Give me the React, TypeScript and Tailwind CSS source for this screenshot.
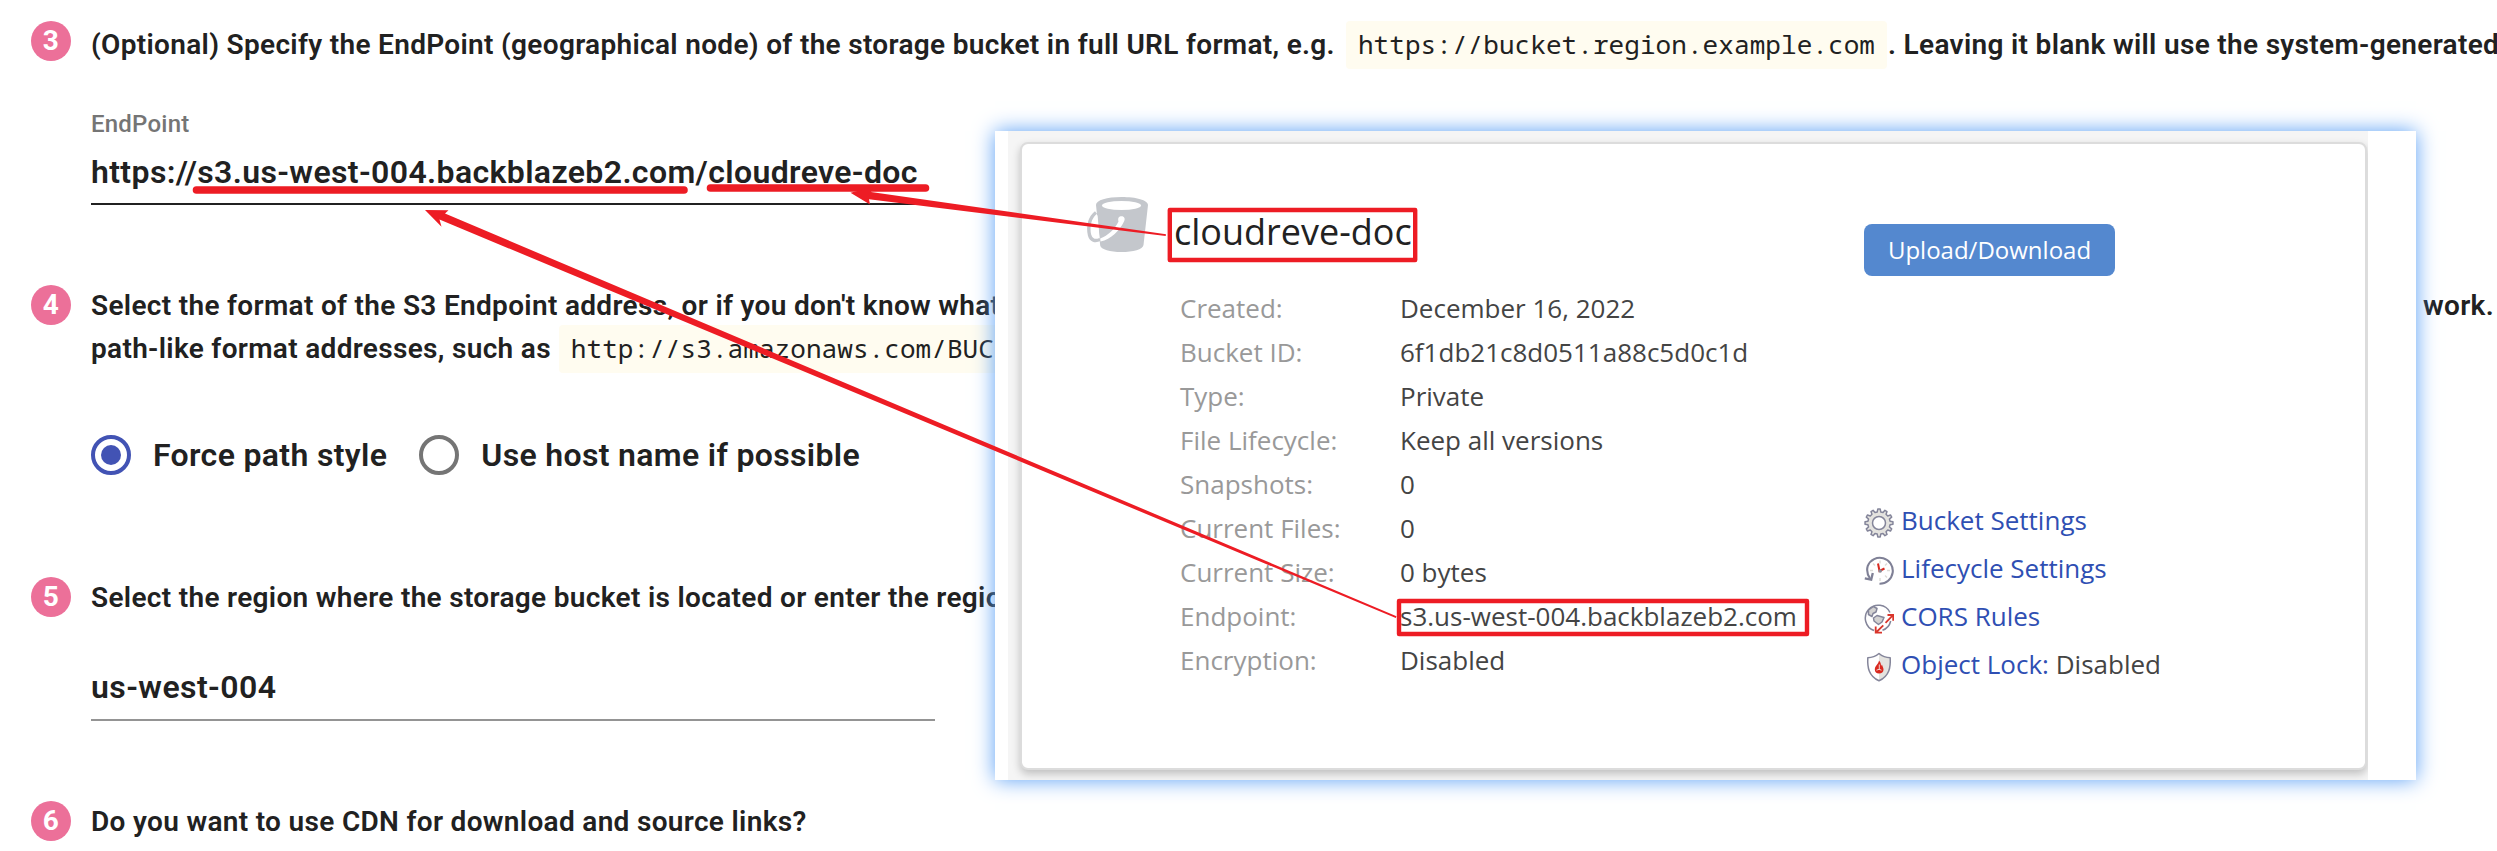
import type { ReactNode } from 'react';

const details: [string, string][] = [
  ['Created:', 'December 16, 2022'],
  ['Bucket ID:', '6f1db21c8d0511a88c5d0c1d'],
  ['Type:', 'Private'],
  ['File Lifecycle:', 'Keep all versions'],
  ['Snapshots:', '0'],
  ['Current Files:', '0'],
  ['Current Size:', '0 bytes'],
  ['Endpoint:', 's3.us-west-004.backblazeb2.com'],
  ['Encryption:', 'Disabled'],
];

function Step({ n, className, children }: { n: number; className: string; children?: ReactNode }) {
  return (
    <section className={`flex shrink-0 gap-5 pl-[31px] ${className}`}>
      <div className="flex size-10 shrink-0 items-center justify-center rounded-full bg-[#ec7099] text-[28px] leading-10 font-bold text-white">
        {n}
      </div>
      <div className="min-w-0 flex-1 whitespace-nowrap">{children}</div>
    </section>
  );
}

function Code({ children }: { children: ReactNode }) {
  return (
    <code className="rounded-[4px] bg-[#fffcf0] px-3 pb-[2px] font-['Noto_Sans_Mono','DejaVu_Sans_Mono',monospace] text-[26px] leading-[46px] font-normal tracking-[0.07px]">
      {children}
    </code>
  );
}

function Radio({ checked, label }: { checked?: boolean; label: string }) {
  return (
    <label className="flex h-10 items-center gap-[22px]">
      <span
        className={`flex size-10 items-center justify-center rounded-full border-4 ${checked ? 'border-[#4253b4]' : 'border-[#757575]'}`}
      >
        {checked && <span className="size-5 rounded-full bg-[#4253b4]" />}
      </span>
      <span className="text-[32px] leading-[38px] tracking-[0.34px]">{label}</span>
    </label>
  );
}

function BucketIcon() {
  return (
    <svg width="62" height="56" viewBox="0 0 62 56" fill="none">
      <path
        d="M9 8C9 3 20 0 34.500 0S61 3 61 8L56.500 48C56 52.500 46 55 34.500 55S14 52.500 13.200 48.500Z"
        fill="#c4c7cc"
      />
      <ellipse cx="34.5" cy="8.500" rx="19.500" ry="4.500" fill="#fff" />
      <path d="M10.500 18L12.600 41C9 43 6.500 41.500 5.500 38C4.200 32 6 23 10.500 18Z" fill="#fff" />
      <path d="M9 15.500C3 20 .500 29 2.500 38C4 43.500 8 44.500 13 42.500" stroke="#c4c7cc" strokeWidth="3.400" />
      <path
        d="M31.500 24.500C30.500 21 32 19.300 34.500 19.300C37.500 19.300 38.500 22 37 24.500C33 33 24 42.500 13.500 44.500L13.200 41.500C21 38.500 28 32 31.500 24.500Z"
        fill="#fff"
      />
    </svg>
  );
}

const gearPath = Array.from({ length: 12 }, (_, i) => {
  const point = (r: number, deg: number) => {
    const a = ((i * 30 + deg - 90) * Math.PI) / 180;
    return `${(15 + r * Math.cos(a)).toFixed(2)} ${(15 + r * Math.sin(a)).toFixed(2)}`;
  };
  return `${i ? 'L' : 'M'}${point(11.2, -9)}L${point(14, -5)}L${point(14, 5)}L${point(11.2, 9)}`;
}).join('');

function GearIcon() {
  return (
    <svg width="30" height="30" viewBox="0 0 30 30" stroke="#84859a" strokeWidth="1.500" strokeLinejoin="round">
      <path d={`${gearPath}Z`} fill="#e4e3df" />
      <circle cx="15" cy="15" r="6.500" fill="#fff" />
    </svg>
  );
}

function ClockIcon() {
  return (
    <svg width="30" height="30" viewBox="0 0 30 30" fill="none">
      <path d="M15.500 27.800A13 13 0 1 0 3.800 9.800C2.800 13 3 18 6 22.500" stroke="#7f8096" strokeWidth="2.100" />
      <path d="M0.800 22.300L7.200 23.600L8.800 17" stroke="#7f8096" strokeWidth="2.300" />
      <path
        d="M16 4.500V7.500M16 22V25M6 14.500H9M23 14.500H26M9 7.500L11 9.500M23 7.500L21 9.500M23 21.500L21 19.500"
        stroke="#dddcd8"
        strokeWidth="1.400"
      />
      <path d="M14 7.500L15.500 15L20.500 12.500" stroke="#d9291f" strokeWidth="2" />
      <circle cx="16.200" cy="15" r="1.800" fill="#8b8b98" />
    </svg>
  );
}

function CorsIcon() {
  return (
    <svg width="30" height="30" viewBox="0 0 30 30" fill="none">
      <path d="M3.500 20.500C7 25 10 26 12.500 25.500L9 27Z" fill="#e4e3df" />
      <path d="M26 8.500A13 13 0 1 0 10 26.500M26.700 17A13 13 0 0 1 18.500 26.300" stroke="#84859a" strokeWidth="1.500" />
      <path
        d="M4.500 6L9.500 2.500L13 4.500L12 8L9 9.500L8 12.500L4.500 10.500Z M9.500 14L13 11.500L20 13.500L18 18L14.500 20.500L10 17Z"
        fill="#d3d2d1"
        stroke="#84859a"
        strokeWidth="1.500"
        strokeLinejoin="round"
      />
      <path
        d="M12 28.500L19.300 21.300M21.500 18.800L29 11.200M23.500 11H29.200V16.800M11.700 22.500V28.700H18"
        stroke="#d9352b"
        strokeWidth="1.800"
      />
    </svg>
  );
}

function ShieldIcon() {
  return (
    <svg width="30" height="30" viewBox="0 0 30 30" fill="none">
      <path d="M15 1.500C18.500 4.500 22 5.700 26 5.700C26.500 15 25.500 24 15 28.500Z" fill="#e4e3df" />
      <path
        d="M15 1.500C11.500 4.500 8 5.700 3.800 5.700C3.300 15 4.500 24 15 28.800C25.500 24 26.700 15 26.200 5.700C22 5.700 18.500 4.500 15 1.500Z"
        stroke="#84859a"
        strokeWidth="1.500"
        strokeLinejoin="round"
      />
      <path
        d="M15 8.500C14.500 12 10.800 14 10.800 17.500C10.800 20 12.500 21.500 15 21.500C17.700 21.500 19.500 20 19.500 17.500C19.500 15.500 18.300 14.500 18 12.500L17 14C17.100 12 16.500 10 15 8.500Z"
        fill="#d9291f"
      />
      <path d="M15.300 12.500V17M12.500 18.200L15 17.300L17.500 18.200" stroke="#f3d4d0" strokeWidth="1" />
    </svg>
  );
}

const links: { icon: ReactNode; label: string; extra?: string }[] = [
  { icon: <GearIcon />, label: 'Bucket Settings' },
  { icon: <ClockIcon />, label: 'Lifecycle Settings' },
  { icon: <CorsIcon />, label: 'CORS Rules' },
  { icon: <ShieldIcon />, label: 'Object Lock:', extra: 'Disabled' },
];

function BucketPanel() {
  return (
    <aside className="absolute top-[131px] left-[995px] h-[649px] w-[1421px] bg-white pl-[13px] font-['Open_Sans','Noto_Sans',sans-serif] text-[26px] font-normal tracking-normal shadow-[0_0_20px_#5a9ff5]">
      <div className="h-full w-[1360px] overflow-hidden bg-[#f5f5f5] pt-[11px] pl-[12px]">
        <div className="flex h-[628px] w-[1347px] rounded-lg border-2 border-[#dcdcdc] bg-white shadow-[0_4px_8px_rgba(0,0,0,0.22)]">
          <div className="w-[842px] pt-[53px]">
            <div className="flex h-[55px] pl-[65px]">
              <BucketIcon />
              <h2 className="ml-[25px] pt-[8px] text-[36px] leading-[54px] text-[#222]">cloudreve-doc</h2>
            </div>
            <dl className="mt-[34px] ml-[158px] grid grid-cols-[220px_1fr] leading-[44px]">
              {details.map(([k, v]) => (
                <div key={k} className="contents">
                  <dt className="text-[#999]">{k}</dt>
                  <dd className="text-[#444]">{v}</dd>
                </div>
              ))}
            </dl>
          </div>
          <div className="pt-[80px]">
            <button className="block h-[52px] w-[251px] rounded-lg bg-[#5488cf] text-[24px] text-white">
              Upload/Download
            </button>
            <ul className="mt-[220px]">
              {links.map((l) => (
                <li key={l.label} className="flex h-12 gap-[7px] leading-[48px] text-[#2f4fb3]">
                  <span className="pt-[12px]">{l.icon}</span>
                  <span>
                    {l.label}
                    {l.extra && <span className="text-[#444]"> {l.extra}</span>}
                  </span>
                </li>
              ))}
            </ul>
          </div>
        </div>
      </div>
    </aside>
  );
}

function Annotations() {
  return (
    <svg className="absolute inset-0" width="2497" height="851" viewBox="0 0 2497 851" fill="none">
      <g stroke="#ed1c24">
        <path d="M196.500 190H684M710.500 188H925.500" strokeWidth="7.600" strokeLinecap="round" />
        <rect x="1169.800" y="210" width="245.400" height="50" strokeWidth="4.400" strokeLinejoin="round" />
        <rect x="1399" y="601" width="408" height="33" strokeWidth="4.400" strokeLinejoin="round" />
      </g>
      <g fill="#ed1c24">
        <path d="M425 210L448.500 210.300L445 213.600L1396.500 616.200L1395.800 618L439.500 219.500L441.500 226.700Z" />
        <path d="M850.500 192.700L873 187L871 192L1166 234.200L1165.700 235.900L869 199.300L870 204.500Z" />
      </g>
    </svg>
  );
}

export default function App() {
  return (
    <main className="relative flex h-[851px] w-full flex-col overflow-hidden bg-white pt-[21px] font-['Roboto',sans-serif] text-[28px] leading-10 font-semibold tracking-[0.32px] text-[#212121]">
      <Step n={3} className="h-[264px]">
        <p className="flex items-baseline leading-[46px]">
          <span className="mr-[11px]">
            (Optional) Specify the EndPoint (geographical node) of the storage bucket in full URL format, e.g.
          </span>
          <Code>https://bucket.region.example.com</Code>
          <span className="ml-px">. Leaving it blank will use the system-generated</span>
        </p>
        <div className="mt-[43px] w-[844px] border-b-2 border-[#212121]">
          <div className="text-[24px] leading-6 font-medium tracking-[0.22px] text-[#757575]">EndPoint</div>
          <div className="pt-4 pb-[11px] text-[32px] tracking-[0.38px]">
            https://s3.us-west-004.backblazeb2.com/cloudreve-doc
          </div>
        </div>
      </Step>
      <Step n={4} className="h-[292px]">
        <p className="flex justify-between pt-px pr-[3px] leading-[39px]">
          <span>Select the format of the S3 Endpoint address, or if you don't know what</span>
          <span>work.</span>
        </p>
        <p className="flex items-baseline leading-[46px]">
          <span className="mr-[8px]">path-like format addresses, such as</span>
          <Code>http://s3.amazonaws.com/BUCKET</Code>
        </p>
        <div className="mt-[62px] flex gap-8">
          <Radio checked label="Force path style" />
          <Radio label="Use host name if possible" />
        </div>
      </Step>
      <Step n={5} className="h-[224px]">
        <p className="pt-px leading-[39px]">
          Select the region where the storage bucket is located or enter the region
        </p>
        <div className="mt-[50px] w-[844px] border-b-2 border-[#949494] pt-px pb-3 text-[32px] leading-[39px] tracking-[0.43px]">
          us-west-004
        </div>
      </Step>
      <Step n={6} className="h-10">
        <p className="pt-px leading-[39px]">Do you want to use CDN for download and source links?</p>
      </Step>
      <BucketPanel />
      <Annotations />
    </main>
  );
}
